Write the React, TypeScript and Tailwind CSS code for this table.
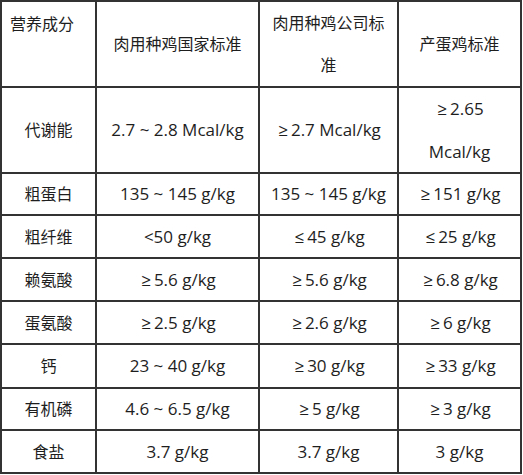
import React from "react";

function V({ t }: { t: string }) {
  const parts = t.split(/([≥≤])/);
  return (
    <>
      {parts.map((p, i) =>
        p === "≥" || p === "≤" ? (
          <span key={i} className="inline-block ml-[2px] mr-[3px]">{p}</span>
        ) : (
          <React.Fragment key={i}>{p}</React.Fragment>
        )
      )}
    </>
  );
}

const rows: { name: string; h: string; a: string; b: string; c: React.ReactNode }[] = [
  { name: "代谢能", h: "h-[84px]", a: "2.7 ~ 2.8 Mcal/kg", b: "≥2.7 Mcal/kg", c: (<span className="leading-[43px]"><V t="≥2.65" /><br />Mcal/kg</span>) },
  { name: "粗蛋白", h: "h-[40px]", a: "135 ~ 145 g/kg", b: "135 ~ 145 g/kg", c: "≥151 g/kg" },
  { name: "粗纤维", h: "h-[41px]", a: "<50 g/kg", b: "≤45 g/kg", c: "≤25 g/kg" },
  { name: "赖氨酸", h: "h-[41px]", a: "≥5.6 g/kg", b: "≥5.6 g/kg", c: "≥6.8 g/kg" },
  { name: "蛋氨酸", h: "h-[41px]", a: "≥2.5 g/kg", b: "≥2.6 g/kg", c: "≥6 g/kg" },
  { name: "钙", h: "h-[42px]", a: "23 ~ 40 g/kg", b: "≥30 g/kg", c: "≥33 g/kg" },
  { name: "有机磷", h: "h-[40px]", a: "4.6 ~ 6.5 g/kg", b: "≥5 g/kg", c: "≥3 g/kg" },
  { name: "食盐", h: "h-[41px]", a: "3.7 g/kg", b: "3.7 g/kg", c: "3 g/kg" },
];

const cell = "bg-white flex items-center justify-center text-center";
const val = "bg-white flex items-center justify-center text-center text-[17px]";

export default function App() {
  return (
    <div
      className="w-[523px] h-[475px] bg-white text-[#1e1e1e] text-[16px]"
      style={{ fontFamily: '"Open Sans", "Noto Sans CJK SC", sans-serif' }}
    >
      <div className="w-[522px] bg-[#333333] p-[2px] grid grid-cols-[93px_161px_137px_121px] gap-[2px]">
        <div className="bg-white h-[84px] pl-[8px] pt-[7px] leading-[30px]">营养成分</div>
        <div className={cell + " h-[84px]"}>肉用种鸡国家标准</div>
        <div className={cell + " h-[84px]"}>
          <span className="leading-[42px]">肉用种鸡公司标<br />准</span>
        </div>
        <div className={cell + " h-[84px]"}>产蛋鸡标准</div>
        {rows.map((r) => (
          <React.Fragment key={r.name}>
            <div className={cell + " " + r.h}>{r.name}</div>
            <div className={val + " " + r.h}><V t={r.a} /></div>
            <div className={val + " " + r.h}><V t={r.b} /></div>
            <div className={val + " " + r.h}>{typeof r.c === "string" ? <V t={r.c} /> : r.c}</div>
          </React.Fragment>
        ))}
      </div>
    </div>
  );
}
